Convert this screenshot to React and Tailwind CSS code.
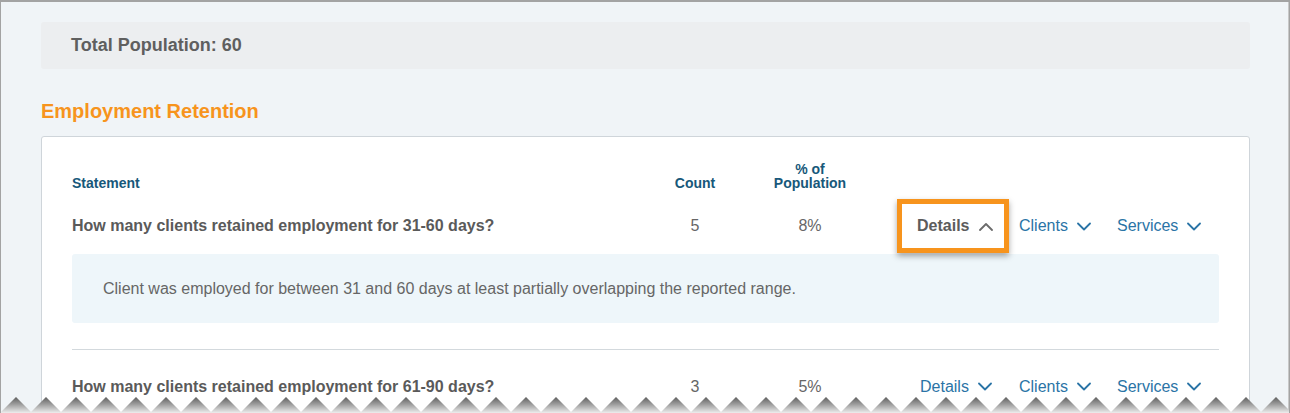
import React from 'react';

const rows = [
  {
    statement: 'How many clients retained employment for 31-60 days?',
    count: 5,
    percent: '8%',
    open: true,
    details: 'Client was employed for between 31 and 60 days at least partially overlapping the reported range.',
  },
  {
    statement: 'How many clients retained employment for 61-90 days?',
    count: 3,
    percent: '5%',
    open: false,
  },
];

const Chevron = ({ up }) => (
  <svg width="14" height="9" viewBox="0 0 14 9" fill="none" className="shrink-0">
    <path
      d={up ? 'M1 8 L7 2 L13 8' : 'M1 1.5 L7 7.5 L13 1.5'}
      stroke="currentColor"
      strokeWidth="1.8"
      strokeLinecap="round"
      strokeLinejoin="round"
    />
  </svg>
);

// torn paper edge along the bottom of the screenshot
const TornEdge = () => (
  <svg className="absolute left-0 bottom-0 w-full h-[17px]">
    <defs>
      <linearGradient id="tornShade" x1="0" y1="0" x2="0" y2="1">
        <stop offset="0%" stopColor="#5e5e5e" />
        <stop offset="45%" stopColor="#9c9c9c" />
        <stop offset="100%" stopColor="#ededed" />
      </linearGradient>
      <pattern id="torn" width="30" height="17" patternUnits="userSpaceOnUse">
        <path d="M0 16 L15 1 L30 16 L30 17 L0 17 Z" fill="url(#tornShade)" />
      </pattern>
    </defs>
    <rect width="100%" height="17" fill="url(#torn)" />
  </svg>
);

const ActionButton = ({ label, width, active, open }) => (
  <button
    className={
      active
        ? 'flex items-center gap-[10px] h-[54px] pl-[15px] border-[5px] border-[#f7941d] shadow-[0_3px_6px_rgba(0,0,0,0.35)] font-bold text-[#5c5c5c] ' + width
        : 'flex items-center gap-[9px] h-[54px] text-[#2a74a6] ' + width
    }
  >
    <span>{label}</span>
    <span className={active ? 'text-[#6b6b6b]' : 'text-[#2a74a6]'}>
      <Chevron up={open} />
    </span>
  </button>
);

const App = () => {
  return (
    <div className="relative h-[413px] overflow-hidden border-t-2 border-l border-r border-[#a3a3a3] shadow-[inset_-1px_0_0_#c8c8c8] bg-[#f0f4f7] pl-10 pr-[39px] pt-[20px] font-['Liberation_Sans',Arial,sans-serif] text-[16px]">
      <div className="flex items-center h-[47px] rounded-[3px] bg-[#eceef0] px-[30px]">
        <span className="text-[18px] font-bold text-[#5f5f5f]">Total Population: 60</span>
      </div>

      <h2 className="mt-[30px] text-[20px] font-bold text-[#f7941d] leading-[24px]">Employment Retention</h2>

      <div className="mt-[13px] rounded-[3px] border border-[#cfd5da] bg-white px-[30px] pt-[25px]">
        <div className="flex items-end text-[14px] font-bold leading-[14px] text-[#17587a]">
          <div className="flex-1">Statement</div>
          <div className="w-[90px] text-center">Count</div>
          <div className="w-[140px] text-center">% of<br />Population</div>
          <div className="w-[339px]"></div>
        </div>

        {rows.map((row, i) => (
          <div key={i}>
            {i > 0 && <div className="mt-[26px] h-px bg-[#d3d9dd]"></div>}
            <div className={i > 0 ? 'flex items-center h-[57px] mt-[8px]' : 'flex items-center h-[56px] mt-[8px]'}>
              <div className="flex-1 font-bold text-[#5a5a5a]">{row.statement}</div>
              <div className="w-[90px] text-center text-[#666]">{row.count}</div>
              <div className="w-[140px] text-center text-[#666]">{row.percent}</div>
              <div className="flex w-[339px] items-center pl-[17px]">
                {row.open ? (
                  <ActionButton label="Details" width="w-[112px]" active open />
                ) : (
                  <div className="w-[112px] pl-[23px]">
                    <ActionButton label="Details" width="" />
                  </div>
                )}
                <div className="w-[98px] pl-[10px]">
                  <ActionButton label="Clients" width="" />
                </div>
                <div className="pl-[10px]">
                  <ActionButton label="Services" width="" />
                </div>
              </div>
            </div>
            {row.details && (
              <div className="flex items-center h-[69px] rounded-[3px] bg-[#eef6fa] px-[31px] text-[#666]">
                {row.details}
              </div>
            )}
          </div>
        ))}
      </div>

      <TornEdge />
    </div>
  );
};

export default App;
